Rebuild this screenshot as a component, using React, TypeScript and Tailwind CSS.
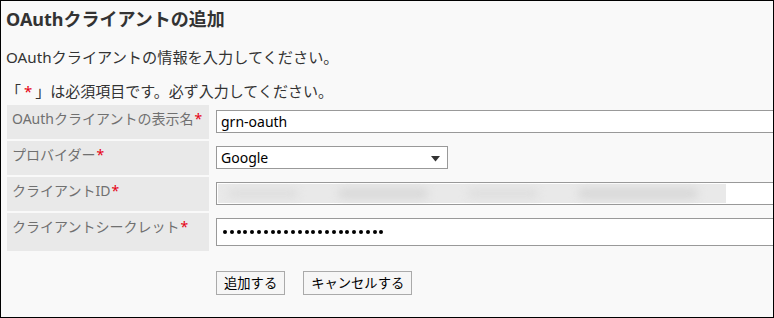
const font = "font-['Noto_Sans','Noto_Sans_CJK_JP',sans-serif]"

function Req() {
  return <span className="text-[#e60012] ml-[1px]">*</span>
}

function Label({ text, tall = false }: { text: string; tall?: boolean }) {
  return (
    <div
      className={`bg-[#e9e9e9] pl-[5px] pt-[4px] text-[14px] leading-[20px] text-[#707070] ${
        tall ? 'h-[38px]' : 'h-[34px]'
      }`}
    >
      {text}
      <Req />
    </div>
  )
}

export default function App() {
  const dots = Array.from({ length: 24 })
  return (
    <div
      className={`w-[774px] h-[318px] overflow-hidden border border-black bg-[#f9f9f9] text-[#333] ${font}`}
    >
      <div className="pl-[5px] pt-[6px] text-[18px] leading-[24px] font-bold text-[#333]">
        OAuthクライアントの追加
      </div>
      <div className="pl-[5px] mt-[16px] text-[15.2px] leading-[20px]">
        OAuthクライアントの情報を入力してください。
      </div>
      <div className="pl-[5px] mt-[14px] text-[15px] leading-[20px]">
        「<span className="text-[#e60012] px-[3px]">*</span>」は必須項目です。必ず入力してください。
      </div>

      <div className="ml-[6px] mt-[4px] grid grid-cols-[202px_600px] gap-x-[7px] gap-y-[2px]">
        <Label text="OAuthクライアントの表示名" />
        <div className="pt-[5px]">
          <div className="h-[23px] border border-[#999] bg-white pl-[4px] text-[14px] leading-[21px] text-black">
            grn-oauth
          </div>
        </div>

        <Label text="プロバイダー" />
        <div className="pt-[5px]">
          <div className="relative w-[232px] h-[23px] border border-[#999] bg-white pl-[4px] text-[14px] leading-[21px] text-black">
            Google
            <svg
              className="absolute right-[7px] top-[9px]"
              width="9"
              height="6"
              viewBox="0 0 9 6"
            >
              <path d="M0 0h9L4.5 5.5z" fill="#333" />
            </svg>
          </div>
        </div>

        <Label text="クライアントID" />
        <div className="pt-[5px]">
          <div className="relative h-[23px] border border-[#999] bg-white overflow-hidden">
            <div className="absolute left-[1px] top-[1px] w-[508px] h-[19px] bg-[#e9e9e9]" />
            <div className="absolute left-[1px] top-[1px] w-[508px] h-[19px] flex items-center gap-[40px] pl-[10px] blur-[4px]">
              <div className="w-[70px] h-[9px] bg-[#dedede] rounded-full" />
              <div className="w-[90px] h-[11px] bg-[#d9d9d9] rounded-full" />
              <div className="w-[70px] h-[9px] bg-[#dedede] rounded-full" />
              <div className="w-[120px] h-[11px] bg-[#d8d8d8] rounded-full" />
            </div>
          </div>
        </div>

        <Label text="クライアントシークレット" tall />
        <div className="pt-[5px]">
          <div className="h-[28px] border border-[#999] bg-white pl-[6px] flex items-center gap-[2.8px]">
            {dots.map((_, i) => (
              <div key={i} className="w-[4px] h-[4px] rounded-full bg-black" />
            ))}
          </div>
        </div>
      </div>

      <div className="ml-[215px] mt-[20px] flex gap-[18px] text-[13.3px] leading-[22px] text-black">
        <button className="h-[24px] px-[7px] border border-[#aaa] bg-[#f6f6f6]">追加する</button>
        <button className="h-[24px] px-[7px] border border-[#aaa] bg-[#f6f6f6]">キャンセルする</button>
      </div>
    </div>
  )
}
